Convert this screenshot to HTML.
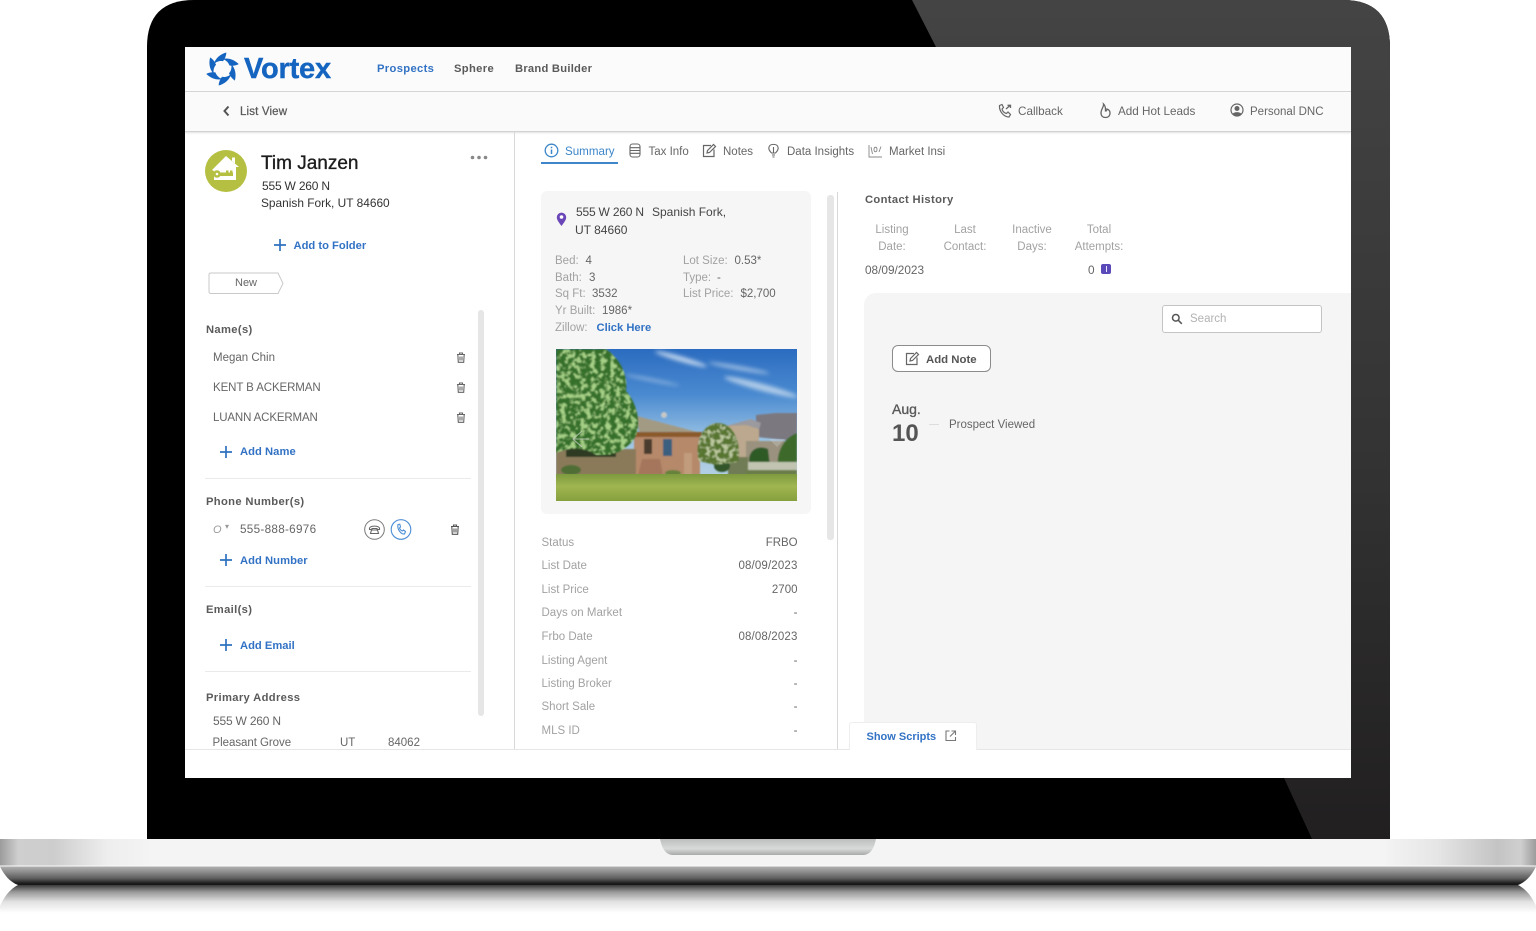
<!DOCTYPE html>
<html><head><meta charset="utf-8"><title>Vortex</title>
<style>
html,body{margin:0;padding:0;background:#fff}
body{width:1536px;height:931px;position:relative;overflow:hidden;font-family:"Liberation Sans",sans-serif}
.a{position:absolute}
.t{position:absolute;white-space:nowrap;line-height:16px;font-size:11.7px;color:#666}
.l{color:#a2a2a2}
.h{color:#5a5a5a;font-weight:bold;font-size:11.2px;letter-spacing:.35px}
.b{color:#3272c4;font-weight:bold;font-size:11.2px}
.s{font-size:11.5px}
.r{text-align:right}
.c{text-align:center}
svg{position:absolute;overflow:visible}
</style></head><body>

<svg style="left:0;top:0" width="1536" height="931" viewBox="0 0 1536 931">
<defs>
<linearGradient id="gl" x1="0" y1="0" x2="0" y2="1"><stop offset="0" stop-color="#444"/><stop offset=".55" stop-color="#333"/><stop offset="1" stop-color="#211f20"/></linearGradient>
<linearGradient id="top" x1="0" y1="0" x2="1" y2="0"><stop offset="0" stop-color="#9c9c9c"/><stop offset=".012" stop-color="#cfcfcf"/><stop offset=".035" stop-color="#cdcdcd"/><stop offset=".07" stop-color="#eeeeee"/><stop offset=".1" stop-color="#f4f4f4"/><stop offset=".9" stop-color="#f4f4f4"/><stop offset=".935" stop-color="#e6e6e6"/><stop offset=".975" stop-color="#c4c4c4"/><stop offset=".99" stop-color="#cfcfcf"/><stop offset="1" stop-color="#9c9c9c"/></linearGradient>
<linearGradient id="low" x1="0" y1="0" x2="0" y2="1"><stop offset="0" stop-color="#b0b0b0"/><stop offset=".3" stop-color="#8c8c8c"/><stop offset=".65" stop-color="#5c5c5c"/><stop offset=".9" stop-color="#1e1e1e"/><stop offset="1" stop-color="#151515"/></linearGradient>
<linearGradient id="ref" x1="0" y1="0" x2="0" y2="1"><stop offset="0" stop-color="#3a3a3a"/><stop offset=".25" stop-color="#999"/><stop offset=".6" stop-color="#e2e2e2"/><stop offset="1" stop-color="#fff"/></linearGradient>
<linearGradient id="notch" x1="0" y1="0" x2="0" y2="1"><stop offset="0" stop-color="#bdbfbf"/><stop offset=".6" stop-color="#d8dada"/><stop offset="1" stop-color="#a9abab"/></linearGradient>
</defs>
<path d="M147 839V47Q147 0 194 0H1343Q1390 0 1390 47V839Z" fill="#000"/>
<path d="M912 0H1343Q1390 0 1390 47V839H1312L1284 778H1351V47H936Z" fill="url(#gl)"/>
<rect x="0" y="839" width="1536" height="27" fill="url(#top)"/>
<rect x="0" y="865.5" width="1536" height="1" fill="#fbfbfb"/>
<path d="M0 866.5H1536C1532 875 1526 882 1518 885H18C10 882 4 875 0 866.5Z" fill="url(#low)"/>
<path d="M660 839H876C874 848 871 854 864 855H672C665 854 662 848 660 839Z" fill="url(#notch)"/>
<path d="M18 885H1518C1526 889 1532 897 1536 906V913H0V906C4 897 10 889 18 885Z" fill="url(#ref)"/>
</svg>

<div class="a" style="left:185px;top:47px;width:1166px;height:731px;background:#fff;overflow:hidden">
<div class="a" style="left:0;top:0;width:1166px;height:44px;background:#fbfbfb;border-bottom:1px solid #d7d7d7"></div>
<div class="a" style="left:0;top:45px;width:1166px;height:39px;background:#fafafa;border-bottom:1px solid #d2d2d2;box-shadow:0 1px 2px rgba(0,0,0,.12)"></div>
<div class="a" style="left:329px;top:85px;width:1px;height:617px;background:#d8d8d8"></div>
<div class="a" style="left:652px;top:145px;width:1px;height:557px;background:#d8d8d8"></div>
<div class="a" style="left:0;top:702px;width:1166px;height:1px;background:#e6e6e6"></div>
<div class="a" style="left:679px;top:246px;width:487px;height:456px;background:#f5f5f5;border-top-left-radius:12px"></div>
<div class="a" style="left:356px;top:144px;width:270px;height:323px;background:#f6f6f6;border-radius:6px"></div>
<div class="a" style="left:293px;top:263px;width:6px;height:406px;background:#e6e6e6;border-radius:3px"></div>
<div class="a" style="left:642px;top:148px;width:7px;height:345px;background:#e6e6e6;border-radius:3px"></div>
<div class="a" style="left:664px;top:675px;width:126px;height:27px;background:#fff;border:1px solid #eee;border-bottom:none;border-radius:3px 3px 0 0"></div>
<div class="a" style="left:977px;top:258px;width:158px;height:26px;background:#fff;border:1px solid #c4c4c4;border-radius:3px"></div>
<div class="a" style="left:707px;top:298px;width:97px;height:25px;background:#fff;border:1px solid #8c8c8c;border-radius:6px"></div>
<div class="a" style="left:356px;top:115px;width:77px;height:2px;background:#3c86c9"></div>
<div class="a" style="left:20px;top:431px;width:266px;height:1px;background:#eaeaea"></div>
<div class="a" style="left:20px;top:539px;width:266px;height:1px;background:#eaeaea"></div>
<div class="a" style="left:20px;top:624px;width:266px;height:1px;background:#eaeaea"></div>
</div>

<!-- logo -->
<svg style="left:206px;top:52px" width="33" height="34" viewBox="-17 -17 34 34">
<g fill="#1565c0">
<path d="M4 -17C-2 -15.500 -7.500 -11 -9 -5C-6.500 -7.500 -3 -8.800 .5 -8C2.500 -10.500 3.800 -13.500 4 -17Z"/>
<path d="M4 -17C-2 -15.500 -7.500 -11 -9 -5C-6.500 -7.500 -3 -8.800 .5 -8C2.500 -10.500 3.800 -13.500 4 -17Z" transform="rotate(60)"/>
<path d="M4 -17C-2 -15.500 -7.500 -11 -9 -5C-6.500 -7.500 -3 -8.800 .5 -8C2.500 -10.500 3.800 -13.500 4 -17Z" transform="rotate(120)"/>
<path d="M4 -17C-2 -15.500 -7.500 -11 -9 -5C-6.500 -7.500 -3 -8.800 .5 -8C2.500 -10.500 3.800 -13.500 4 -17Z" transform="rotate(180)"/>
<path d="M4 -17C-2 -15.500 -7.500 -11 -9 -5C-6.500 -7.500 -3 -8.800 .5 -8C2.500 -10.500 3.800 -13.500 4 -17Z" transform="rotate(240)"/>
<path d="M4 -17C-2 -15.500 -7.500 -11 -9 -5C-6.500 -7.500 -3 -8.800 .5 -8C2.500 -10.500 3.800 -13.500 4 -17Z" transform="rotate(300)"/>
</g></svg>
<div class="t" style="left:244px;top:52px;line-height:34px;font-size:29px;font-weight:bold;color:#1565c0;letter-spacing:-.2px;-webkit-text-stroke:.4px #1565c0">Vortex</div>

<!-- nav -->
<div class="t h" style="left:377px;top:61px;color:#3272c4">Prospects</div>
<div class="t h" style="left:454px;top:61px">Sphere</div>
<div class="t h" style="left:515px;top:61px;letter-spacing:.25px">Brand Builder</div>
<svg style="left:222px;top:105px" width="9" height="12"><path d="M6.500 1.500L2.500 6L6.500 10.500" fill="none" stroke="#555" stroke-width="2"/></svg>
<div class="t" style="left:240px;top:103.500px;color:#5a5a5a;font-size:11.5px;letter-spacing:.15px;-webkit-text-stroke:.25px #5a5a5a">List View</div>

<svg style="left:997px;top:103px" width="16" height="16" viewBox="0 0 16 16" fill="none" stroke="#666" stroke-width="1.200"><path d="M2.500 2.500L5 1.500L6.500 4.500L5 6C5.500 8 7 9.800 9.500 10.500L11 9L13.500 11.500L12 14C7 14 2 8.500 2.500 2.500Z"/><path d="M9 6L13 2.500M10.500 2.300H13.500V5" stroke-width="1.300"/></svg>
<div class="t" style="left:1018px;top:103.500px">Callback</div>
<svg style="left:1099px;top:103px" width="13" height="16" viewBox="0 0 13 16" fill="none" stroke="#666" stroke-width="1.300"><path d="M4.500 1C5 4 2 6 2 10C2 13 4 14.500 6.500 14.500C9 14.500 11 13 11 10C11 7.500 9.500 6.500 8 6C8 7 7.500 8 6.500 8C6.500 5 6.500 3 4.500 1Z"/></svg>
<div class="t" style="left:1118px;top:103.500px">Add Hot Leads</div>
<svg style="left:1230px;top:103px" width="14" height="15" viewBox="0 0 14 15"><circle cx="7" cy="7" r="6" fill="none" stroke="#666" stroke-width="1.200"/><circle cx="7" cy="5.500" r="2.500" fill="#666"/><path d="M2.500 11C4 8.500 10 8.500 11.500 11C9.500 13.500 4.500 13.500 2.500 11Z" fill="#666"/></svg>
<div class="t" style="left:1250px;top:103.500px;font-size:11.5px">Personal DNC</div>

<!-- avatar -->
<svg style="left:205px;top:150px" width="42" height="42" viewBox="0 0 42 42">
<circle cx="21" cy="21" r="21" fill="#b5bf42"/>
<path d="M21 6L34 17H31V30H9V21L7 20Z" fill="#fff"/>
<path d="M27 11V7.500H30V13.500" fill="#fff"/>
<circle cx="12" cy="24" r="3.800" fill="#b5bf42"/><rect x="14" y="22.500" width="14" height="3.500" fill="#b5bf42"/><rect x="21" y="20.500" width="2.500" height="3" fill="#b5bf42"/><rect x="25" y="20.500" width="2.500" height="3" fill="#b5bf42"/>
<circle cx="12" cy="24" r="1.300" fill="#fff"/>
</svg>
<div class="t" style="left:261px;top:153px;line-height:22px;font-size:19px;color:#1d1d1d;-webkit-text-stroke:.35px #1d1d1d">Tim Janzen</div>
<div class="t" style="left:262px;top:178px;font-size:12px;color:#333;letter-spacing:-.2px">555 W 260 N</div>
<div class="t" style="left:261px;top:195px;font-size:11.9px;color:#333">Spanish Fork, UT 84660</div>
<svg style="left:470px;top:155px" width="18" height="5"><circle cx="2.500" cy="2.500" r="1.800" fill="#888"/><circle cx="9" cy="2.500" r="1.800" fill="#888"/><circle cx="15.500" cy="2.500" r="1.800" fill="#888"/></svg>

<svg style="left:274px;top:239px" width="12" height="12"><path d="M6 0V12M0 6H12" stroke="#2f72c0" stroke-width="1.700"/></svg>
<div class="t b" style="left:293.500px;top:237.500px">Add to Folder</div>
<svg style="left:208px;top:272px" width="77" height="23" viewBox="0 0 77 23"><path d="M3 1H70L75 11.500L70 21.500H3Q1 21.500 1 19.500V3Q1 1 3 1Z" fill="#fff" stroke="#c9c9c9"/></svg>
<div class="t" style="left:235px;top:275px;font-size:11px">New</div>

<!-- names -->
<div class="t h" style="left:206px;top:322px">Name(s)</div>
<div class="t s" style="left:213px;top:350px">Megan Chin</div>
<div class="t s" style="left:213px;top:380px;letter-spacing:-.1px">KENT B ACKERMAN</div>
<div class="t s" style="left:213px;top:410px;letter-spacing:-.15px">LUANN ACKERMAN</div>
<svg style="left:456px;top:352px" width="10" height="11" viewBox="0 0 10 11"><path d="M1 2.500H9M3.500 2.500V1H6.500V2.500M1.800 2.500L2.300 10.300H7.700L8.200 2.500M4 4.500V8.500M6 4.500V8.500" fill="none" stroke="#666" stroke-width="1.100"/></svg>
<svg style="left:456px;top:382px" width="10" height="11" viewBox="0 0 10 11"><path d="M1 2.500H9M3.500 2.500V1H6.500V2.500M1.800 2.500L2.300 10.300H7.700L8.200 2.500M4 4.500V8.500M6 4.500V8.500" fill="none" stroke="#666" stroke-width="1.100"/></svg>
<svg style="left:456px;top:412px" width="10" height="11" viewBox="0 0 10 11"><path d="M1 2.500H9M3.500 2.500V1H6.500V2.500M1.800 2.500L2.300 10.300H7.700L8.200 2.500M4 4.500V8.500M6 4.500V8.500" fill="none" stroke="#666" stroke-width="1.100"/></svg>
<svg style="left:220px;top:446px" width="12" height="12"><path d="M6 0V12M0 6H12" stroke="#2f72c0" stroke-width="1.700"/></svg>
<div class="t b" style="left:240px;top:444px;letter-spacing:.05px">Add Name</div>

<div class="t h" style="left:206px;top:494px">Phone Number(s)</div>
<div class="t" style="left:213px;top:522px;font-size:11px;font-style:italic;color:#999">O</div>
<div class="t" style="left:225px;top:519px;font-size:8px;color:#999">▾</div>
<div class="t" style="left:240px;top:522px;letter-spacing:.3px">555-888-6976</div>
<svg style="left:364px;top:519px" width="22" height="22" viewBox="0 0 22 22"><circle cx="10.500" cy="10.500" r="9.800" fill="#fff" stroke="#777" stroke-width="1"/><path d="M5.500 9C7 6.500 14 6.500 15.500 9V10.500H13V9.500H8V10.500H5.500ZM7.500 11H13.500L14.500 14.500H6.500Z" fill="none" stroke="#666" stroke-width="1.100"/></svg>
<svg style="left:390px;top:519px" width="22" height="22" viewBox="0 0 22 22"><circle cx="11" cy="10.500" r="9.800" fill="#fff" stroke="#4a8dd4" stroke-width="1.100"/><path d="M8 5.500L9.800 5.200L10.500 8L9.500 9C10 10.500 11 11.500 12.500 12L13.500 11L15.500 12.500L14.500 15C11 15.500 7 10.500 8 5.500Z" fill="none" stroke="#4a8dd4" stroke-width="1.100"/></svg>
<svg style="left:450px;top:524px" width="10" height="11" viewBox="0 0 10 11"><path d="M1 2.500H9M3.500 2.500V1H6.500V2.500M1.800 2.500L2.300 10.300H7.700L8.200 2.500M4 4.500V8.500M6 4.500V8.500" fill="none" stroke="#555" stroke-width="1.100"/></svg>
<svg style="left:220px;top:554px" width="12" height="12"><path d="M6 0V12M0 6H12" stroke="#2f72c0" stroke-width="1.700"/></svg>
<div class="t b" style="left:240px;top:553px;letter-spacing:.05px">Add Number</div>

<div class="t h" style="left:206px;top:602px">Email(s)</div>
<svg style="left:220px;top:639px" width="12" height="12"><path d="M6 0V12M0 6H12" stroke="#2f72c0" stroke-width="1.700"/></svg>
<div class="t b" style="left:240px;top:638px">Add Email</div>
<div class="t h" style="left:206px;top:690px">Primary Address</div>
<div class="t" style="left:213px;top:713px;font-size:12px;letter-spacing:-.2px">555 W 260 N</div>
<div class="t s" style="left:212.500px;top:735px;letter-spacing:-.05px">Pleasant Grove</div>
<div class="t s" style="left:340px;top:735px">UT</div>
<div class="t s" style="left:388px;top:735px">84062</div>

<!-- tabs -->
<svg style="left:544px;top:143px" width="15" height="15" viewBox="0 0 15 15"><circle cx="7.500" cy="7.500" r="6.300" fill="none" stroke="#3c86c9" stroke-width="1.300"/><path d="M7.500 6.500V11M7.500 3.800V5.300" stroke="#3c86c9" stroke-width="1.500"/></svg>
<div class="t" style="left:565px;top:143.500px;color:#3c86c9;font-size:11.6px">Summary</div>
<svg style="left:629px;top:143px" width="12" height="15" viewBox="0 0 12 15" fill="none" stroke="#666" stroke-width="1.100"><rect x="1" y="1" width="10" height="13" rx="2.500"/><path d="M1 4.700H11M1 7.500H11M1 10.300H11"/></svg>
<div class="t s" style="left:648.500px;top:143.500px">Tax Info</div>
<svg style="left:702px;top:143px" width="15" height="15" viewBox="0 0 15 15" fill="none" stroke="#666" stroke-width="1.200"><path d="M9 2.500H1.500V13.500H12V6.500"/><path d="M5 10L5.500 7.500L11.500 1.500L13.500 3.500L7.500 9.500Z"/></svg>
<div class="t s" style="left:723px;top:143.500px">Notes</div>
<svg style="left:768px;top:143px" width="11" height="15" viewBox="0 0 11 15" fill="none" stroke="#666" stroke-width="1.100"><path d="M3.500 10C1 7.500 .5 5.500 1 4C2 .5 9 .5 10 4C10.500 5.500 10 7.500 7.500 10Z"/><path d="M5.500 4V10M4 12H7M4.500 14H6.500"/></svg>
<div class="t s" style="left:787px;top:143.500px">Data Insights</div>
<svg style="left:868px;top:144px" width="15" height="14" viewBox="0 0 15 14" fill="none" stroke="#888" stroke-width=".9"><path d="M1 1V13H14"/><path d="M3 3L4.500 10M6 5.500C6 2.500 9 2.500 9 5.500C9 8.500 6 8.500 6 5.500ZM11 8L13 2.500"/></svg>
<div class="t s" style="left:889px;top:143.500px">Market Insi</div>

<!-- summary -->
<svg style="left:556px;top:212px" width="11" height="14" viewBox="0 0 11 14"><path d="M5.500 14C2 9.500 .8 7.500 .8 5.300A4.700 4.700 0 0 1 10.200 5.300C10.200 7.500 9 9.500 5.500 14Z" fill="#6b46b8"/><circle cx="5.500" cy="5" r="1.800" fill="#fff"/></svg>
<div class="t" style="left:576px;top:204px;font-size:12px;color:#444;letter-spacing:-.2px">555 W 260 N</div>
<div class="t" style="left:652px;top:204px;font-size:12px;color:#444">Spanish Fork,</div>
<div class="t" style="left:575px;top:221.500px;font-size:12px;color:#444">UT 84660</div>
<div class="t l s" style="left:555px;top:252.500px">Bed:</div><div class="t s" style="left:585.500px;top:252.500px">4</div>
<div class="t l s" style="left:555px;top:269.500px">Bath:</div><div class="t s" style="left:589px;top:269.500px">3</div>
<div class="t l s" style="left:555px;top:286px">Sq Ft:</div><div class="t s" style="left:592px;top:286px">3532</div>
<div class="t l s" style="left:555px;top:303px">Yr Built:</div><div class="t s" style="left:602px;top:303px">1986*</div>
<div class="t l s" style="left:555px;top:320px">Zillow:</div><div class="t b" style="left:596.500px;top:320px">Click Here</div>
<div class="t l s" style="left:683px;top:252.500px">Lot Size:</div><div class="t s" style="left:734.500px;top:252.500px">0.53*</div>
<div class="t l s" style="left:683px;top:269.500px">Type:</div><div class="t s" style="left:717px;top:269.500px">-</div>
<div class="t l s" style="left:683px;top:286px">List Price:</div><div class="t s" style="left:740.500px;top:286px">$2,700</div>

<!-- photo -->
<svg style="left:556px;top:349px" width="241" height="152" viewBox="0 0 241 152">
<defs>
<linearGradient id="sky" x1="0" y1="0" x2="0" y2="1"><stop offset="0" stop-color="#2c6cc0"/><stop offset=".3" stop-color="#4a8ad0"/><stop offset=".6" stop-color="#9cc4e4"/><stop offset="1" stop-color="#c4d8e4"/></linearGradient>
<linearGradient id="gr" x1="0" y1="0" x2="0" y2="1"><stop offset="0" stop-color="#7d9a3e"/><stop offset=".45" stop-color="#a0b650"/><stop offset="1" stop-color="#86a03e"/></linearGradient>
<clipPath id="cp"><rect width="241" height="152"/></clipPath>
<filter id="bc" x="-20%" y="-100%" width="140%" height="300%"><feGaussianBlur stdDeviation="2"/></filter>
<filter id="b1"><feGaussianBlur stdDeviation=".7"/></filter>
<filter id="leaf" x="0" y="0" width="100%" height="100%">
<feTurbulence type="fractalNoise" baseFrequency=".2" numOctaves="3" seed="4" result="n"/>
<feColorMatrix in="n" values="0 0 0 0 .38  0 0 0 0 .64  0 0 0 0 .24  0 0 0 6 -2.900" result="c"/>
<feComposite in="c" in2="SourceGraphic" operator="in" result="m"/>
<feMerge result="o"><feMergeNode in="SourceGraphic"/><feMergeNode in="m"/></feMerge>
<feGaussianBlur in="o" stdDeviation=".7"/>
</filter>
<filter id="leaf2" x="-5%" y="-5%" width="110%" height="110%">
<feTurbulence type="fractalNoise" baseFrequency=".22" numOctaves="2" seed="9" result="n"/>
<feColorMatrix in="n" values="0 0 0 0 .5  0 0 0 0 .58  0 0 0 0 .34  0 0 0 6 -2.900" result="c"/>
<feComposite in="c" in2="SourceGraphic" operator="in" result="m"/>
<feMerge result="o"><feMergeNode in="SourceGraphic"/><feMergeNode in="m"/></feMerge>
<feGaussianBlur in="o" stdDeviation=".7"/>
</filter>
</defs>
<g clip-path="url(#cp)">
<rect width="241" height="152" fill="url(#sky)"/>
<g fill="#dbe8f4" filter="url(#bc)">
<ellipse cx="125" cy="10" rx="27" ry="2.500" transform="rotate(16 125 10)" opacity=".85"/>
<ellipse cx="183" cy="19" rx="31" ry="2" transform="rotate(10 183 19)" opacity=".6"/>
<ellipse cx="205" cy="38" rx="38" ry="3.500" transform="rotate(15 205 38)" opacity=".7"/>
<ellipse cx="96" cy="31" rx="28" ry="1.200" transform="rotate(11 96 31)" opacity=".6"/>
</g>
<g filter="url(#b1)">
<path d="M200 88V66L220 64L241 64V92Z" fill="#7b7880"/>
<path d="M166 78L195 70L205 74L200 90H166Z" fill="#9b9a9e"/>
<path d="M170 77L190 76L203 80V108H172Z" fill="#bba88e"/>
<path d="M190 92L241 92V115H190Z" fill="#9a927e"/>
<path d="M77 66L145 84H84Z" fill="#a39a84"/>
<circle cx="108" cy="66" r="3" fill="#c6c8c8"/>
<rect x="78" y="83" width="68" height="5" fill="#8a5a2a"/>
<rect x="78" y="88" width="66" height="38" fill="#b5896a"/>
<rect x="107" y="90" width="9" height="17" fill="#3a5f7f"/>
<rect x="88" y="90" width="8" height="15" fill="#4a3a2e"/>
<path d="M86 110H104L107 126H82Z" fill="#a5765c"/>
<rect x="128" y="104" width="8" height="22" fill="#c19b7c"/>
<path d="M0 100H80V126H0Z" fill="#8a7a5a"/>
<path d="M10 95H60V108H10Z" fill="#2e3a22"/>
<path d="M193 110C194 100 203 96 212 100L214 117H193Z" fill="#2f5a28"/>
<path d="M222 118C220 100 230 88 241 84V118Z" fill="#3d6a2c"/>
<rect x="190" y="113" width="51" height="8" fill="#c0c4b0"/>
<rect x="172" y="108" width="20" height="18" fill="#6f7c55"/>
<rect x="190" y="121" width="51" height="5" fill="#6b7d4a"/>
<ellipse cx="166" cy="117" rx="8" ry="6" fill="#33552a"/>
<ellipse cx="15" cy="121" rx="10" ry="5" fill="#4f6e35"/>
<ellipse cx="117" cy="124" rx="8" ry="3" fill="#66823a"/>
</g>
<path d="M143 112C138 92 148 74 162 74C176 74 186 92 182 113L160 116Z" fill="#56752f" filter="url(#leaf2)"/>
<path d="M0 0H50C64 10 72 25 70 42C82 55 86 78 78 90C68 104 52 108 40 106C28 98 14 98 0 104Z" fill="#35702a" filter="url(#leaf)"/>
<rect x="0" y="125" width="241" height="27" fill="url(#gr)"/>
<path d="M0 125.500H241" stroke="#5e7a30" stroke-width="1.500" filter="url(#b1)"/>
<path d="M26 82L17 90L26 98M18 90H33" fill="none" stroke="#d8d8d8" stroke-width="1" opacity=".65"/>
<path d="M213 90L221 98L229 90H213" fill="#d8d8d8" opacity=".3"/>
</g></svg>

<!-- details -->
<div class="t l s" style="left:541.500px;top:534.500px">Status</div><div class="t s r" style="right:738.500px;top:534.500px;letter-spacing:-.05px">FRBO</div>
<div class="t l s" style="left:541.500px;top:558px">List Date</div><div class="t s r" style="right:738.500px;top:558px;letter-spacing:.15px">08/09/2023</div>
<div class="t l s" style="left:541.500px;top:582px">List Price</div><div class="t s r" style="right:738.500px;top:582px">2700</div>
<div class="t l s" style="left:541.500px;top:605px">Days on Market</div><div class="t s r" style="right:738.500px;top:605px">-</div>
<div class="t l s" style="left:541.500px;top:629px">Frbo Date</div><div class="t s r" style="right:738.500px;top:629px;letter-spacing:.15px">08/08/2023</div>
<div class="t l s" style="left:541.500px;top:653px">Listing Agent</div><div class="t s r" style="right:738.500px;top:653px">-</div>
<div class="t l s" style="left:541.500px;top:676px">Listing Broker</div><div class="t s r" style="right:738.500px;top:676px">-</div>
<div class="t l s" style="left:541.500px;top:699px">Short Sale</div><div class="t s r" style="right:738.500px;top:699px">-</div>
<div class="t l s" style="left:541.500px;top:723px">MLS ID</div><div class="t s r" style="right:738.500px;top:723px">-</div>

<!-- contact -->
<div class="t h" style="left:865px;top:192px">Contact History</div>
<div class="t l s c" style="left:852px;width:80px;top:222px">Listing</div>
<div class="t l s c" style="left:852px;width:80px;top:239px">Date:</div>
<div class="t l s c" style="left:925px;width:80px;top:222px">Last</div>
<div class="t l s c" style="left:925px;width:80px;top:239px">Contact:</div>
<div class="t l s c" style="left:992px;width:80px;top:222px">Inactive</div>
<div class="t l s c" style="left:992px;width:80px;top:239px">Days:</div>
<div class="t l s c" style="left:1059px;width:80px;top:222px">Total</div>
<div class="t l s c" style="left:1059px;width:80px;top:239px">Attempts:</div>
<div class="t" style="left:865px;top:262px;font-size:11.8px">08/09/2023</div>
<div class="t" style="left:1088px;top:262px;font-size:11.8px">0</div>
<div class="a" style="left:1101px;top:264px;width:10px;height:10px;background:#5a49b8;border-radius:2px"></div>
<div class="a" style="left:1105.500px;top:266px;width:1.500px;height:6px;background:#e8e8f8"></div>

<svg style="left:1171px;top:313px" width="12" height="12" viewBox="0 0 12 12" fill="none" stroke="#555" stroke-width="1.500"><circle cx="4.800" cy="4.800" r="3.300"/><path d="M7.300 7.300L10.800 10.800"/></svg>
<div class="t s" style="left:1190px;top:311px;color:#b2b2b2">Search</div>
<svg style="left:905px;top:351px" width="15" height="15" viewBox="0 0 15 15" fill="none" stroke="#666" stroke-width="1.200"><path d="M9 2.500H1.500V13.500H12V6.500"/><path d="M5 10L5.500 7.500L11.500 1.500L13.500 3.500L7.500 9.500Z"/></svg>
<div class="t" style="left:926px;top:351.500px;color:#555;font-size:11.4px;font-weight:bold">Add Note</div>
<div class="t" style="left:892px;top:401px;color:#5a5a5a;font-size:14px;-webkit-text-stroke:.35px #5a5a5a">Aug.</div>
<div class="t" style="left:892px;top:420px;line-height:28px;color:#555;font-size:24px;font-weight:bold">10</div>
<div class="a" style="left:929px;top:424px;width:10px;height:1px;background:#ddd"></div>
<div class="t s" style="left:949px;top:417px">Prospect Viewed</div>

<div class="t b" style="left:866.500px;top:729px;font-size:11px">Show Scripts</div>
<svg style="left:945px;top:730px" width="11" height="11" viewBox="0 0 11 11" fill="none" stroke="#777" stroke-width="1.100"><path d="M4.500 1H1V10.500H10.500V7"/><path d="M5 6.500L10 1.500M6.500 1H10.500V5"/></svg>

</body></html>
